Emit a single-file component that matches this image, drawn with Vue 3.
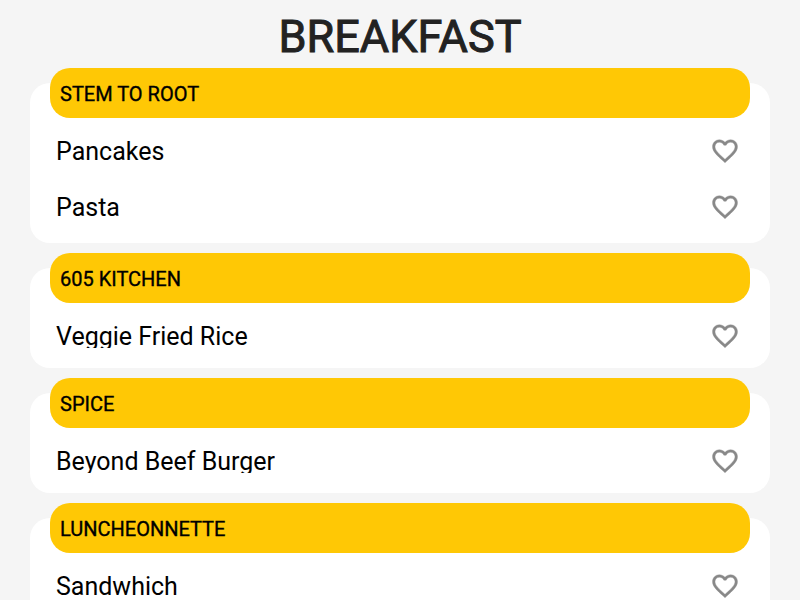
<script setup>
const title = 'BREAKFAST'
const stations = [
  { name: 'STEM TO ROOT', items: ['Pancakes', 'Pasta'] },
  { name: '605 KITCHEN', items: ['Veggie Fried Rice'] },
  { name: 'SPICE', items: ['Beyond Beef Burger'] },
  { name: 'LUNCHEONNETTE', items: ['Sandwhich'] },
]
const cardHeight = (station) => `${40 + station.items.length * 60}px`
</script>

<template>
  <main class="menu">
    <h1 class="title">{{ title }}</h1>
    <section v-for="station in stations" :key="station.name" class="station">
      <h2 class="station-name">{{ station.name }}</h2>
      <div class="items" :style="{ height: cardHeight(station) }">
        <div v-for="item in station.items" :key="item" class="item">
          <span class="item-name">{{ item }}</span>
          <button class="like">
            <svg viewBox="0 0 24 24" width="30" height="30">
              <path d="M16.5 3c-1.74 0-3.41.81-4.5 2.09C10.91 3.81 9.24 3 7.5 3 4.42 3 2 5.42 2 8.5c0 3.78 3.4 6.86 8.55 11.54L12 21.35l1.45-1.32C18.6 15.36 22 12.28 22 8.5 22 5.42 19.58 3 16.5 3zm-4.4 15.55l-.1.1-.1-.1C7.14 14.24 4 11.39 4 8.5 4 6.5 5.5 5 7.5 5c1.54 0 3.04.99 3.57 2.36h1.87C13.46 5.99 14.96 5 16.5 5c2 0 3.5 1.5 3.5 3.5 0 2.89-3.14 5.74-7.9 10.05z" />
            </svg>
          </button>
        </div>
      </div>
    </section>
  </main>
</template>

<style>
body {
  background: #f5f5f5;
}
</style>

<style scoped>
.menu {
  height: 600px;
  overflow: hidden;
  box-sizing: border-box;
  padding: 10px 30px 0;
  font-family: Roboto, sans-serif;
  color: #000;
}
.title {
  margin: 0 0 5px;
  font-size: 45px;
  line-height: 53px;
  font-weight: 400;
  -webkit-text-stroke: 1px #222;
  text-align: center;
  color: #222;
}
.station {
  margin-bottom: 10px;
}
.station-name {
  position: relative;
  box-sizing: border-box;
  height: 50px;
  margin: 0 20px;
  padding: 1px 10px 0;
  border-radius: 20px;
  background: #ffc805;
  font-size: 20px;
  line-height: 50px;
  font-weight: 400;
  -webkit-text-stroke: 0.35px #000;
}
.items {
  box-sizing: border-box;
  margin-top: -35px;
  padding: 40px 26px 0;
  border-radius: 20px;
  background: #fff;
}
.item {
  display: flex;
  align-items: center;
  justify-content: space-between;
  height: 56px;
}
.item-name {
  height: 24px;
  overflow: hidden;
  font-size: 25px;
  line-height: 25px;
  white-space: nowrap;
}
.like {
  display: flex;
  margin: 0 4px 1px 0;
  padding: 0;
  border: 0;
  background: none;
}
.like svg {
  fill: #888;
  stroke: #888;
  stroke-width: 0.3;
}
</style>
